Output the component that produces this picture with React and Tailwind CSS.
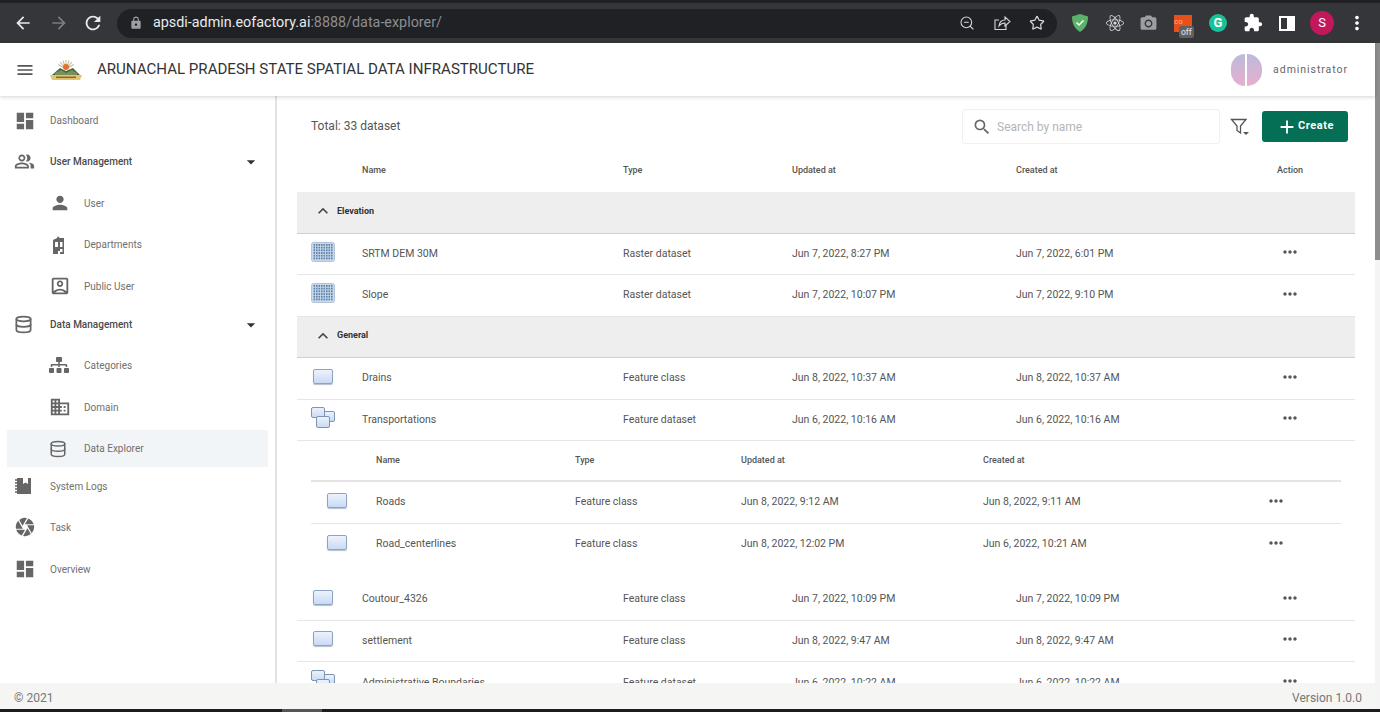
import { Database, ZoomOut, Star } from 'lucide-react'
import {
  MdArrowBack, MdArrowForward, MdRefresh, MdLock, MdMenu, MdDashboard, MdOutlinePeopleAlt, MdPerson,
  MdOutlineAccountBox, MdDomain, MdCamera, MdArrowDropDown, MdSearch, MdAdd, MdMoreHoriz, MdMoreVert,
  MdExpandLess, MdExtension, MdPhotoCamera,
} from 'react-icons/md'
import { FaSitemap, FaReact } from 'react-icons/fa'

function Logo() {
  return (
    <svg width="34" height="22" viewBox="0 0 34 22">
      {[-60, -40, -20, 0, 20, 40, 60].map((a) => (
        <line key={a} x1="17" y1="9" x2="17" y2="1" stroke="#c9b9a0" strokeWidth="1" transform={`rotate(${a} 17 10)`} />
      ))}
      <circle cx="17" cy="8" r="3" fill="#e2702a" />
      <path d="M3 16 L11 9 L17 12 L24 9 L31 16 Z" fill="#3f6b3a" />
      <path d="M6 14 L12 11 L17 14 L23 11 L28 14 L28 16 L6 16 Z" fill="#7a8f5c" />
      <path d="M1 16 H33 L31 21 H3 Z" fill="#e3c56f" />
      <rect x="7" y="17.5" width="20" height="1.6" fill="#8a6a2a" />
    </svg>
  )
}

function Notebook() {
  return (
    <svg width="18" height="18" viewBox="0 0 18 18" fill="#666">
      <path d="M3 1 H9 V7 L11.5 5.5 L14 7 V1 H17 V17 H3 Z" />
      <path d="M1 3 H4 M1 6 H4 M1 9 H4 M1 12 H4 M1 15 H4" stroke="#666" strokeWidth="1.4" />
    </svg>
  )
}

function Building() {
  return (
    <svg width="20" height="20" viewBox="0 0 20 20" fill="#666">
      <path fillRule="evenodd" d="M4 5 L8 3 L9 1 L10.5 3 L15 3 V19 H11 V16 H9 V19 H4 Z M6 7 V12 H9 V7 Z M11 7 V12 H13.5 V7 Z M11 14 H13.5 V17 H11 Z" />
    </svg>
  )
}

function RasterIcon() {
  const cells = []
  for (let y = 0; y < 6; y++) {
    for (let x = 0; x < 8; x++) {
      cells.push(<rect key={`${x}-${y}`} x={2.5 + x * 2.5} y={2 + y * 2.7} width="1.6" height="1.8" fill="#5c83ad" />)
    }
  }
  return (
    <svg width="24" height="20" viewBox="0 0 24 20">
      <rect x="0.5" y="0.5" width="23" height="19" rx="2" fill="#c9d8ea" stroke="#b4c4d8" />
      {cells}
    </svg>
  )
}

function FeatureClassIcon() {
  return <div className="h-[15px] w-[20px] rounded-[2px] border border-[#8ea3c0] bg-linear-to-b from-[#edf3fc] to-[#c8daf5] shadow-[0_1px_1px_#b5bfcc]" />
}

function FeatureDatasetIcon() {
  return (
    <svg width="24" height="21" viewBox="0 0 24 21">
      <defs>
        <linearGradient id="fd" x1="0" y1="0" x2="0" y2="1">
          <stop offset="0" stopColor="#edf3fc" />
          <stop offset="1" stopColor="#c8daf5" />
        </linearGradient>
      </defs>
      <rect x="11.5" y="4.5" width="12" height="10" rx="1.5" fill="url(#fd)" stroke="#7f93b2" />
      <rect x="0.5" y="0.5" width="13" height="10" rx="1.5" fill="url(#fd)" stroke="#7f93b2" />
      <rect x="5.5" y="9.5" width="13" height="11" rx="1.5" fill="url(#fd)" stroke="#7f93b2" />
    </svg>
  )
}

function RowIcon({ kind }) {
  if (kind === 'raster') return <RasterIcon />
  if (kind === 'dataset') return <FeatureDatasetIcon />
  return <div className="pl-[2px]"><FeatureClassIcon /></div>
}

const sideItems = [
  { label: 'Dashboard', icon: <MdDashboard size={22} />, h: 'h-[41px]' },
  { label: 'User Management', icon: <MdOutlinePeopleAlt size={21} />, h: 'h-[41px]', open: true },
  { label: 'User', icon: <MdPerson size={22} />, h: 'h-[42px]', sub: true },
  { label: 'Departments', icon: <Building />, h: 'h-[41px]', sub: true },
  { label: 'Public User', icon: <MdOutlineAccountBox size={22} />, h: 'h-[42px]', sub: true },
  { label: 'Data Management', icon: <Database size={19} strokeWidth={2.2} />, h: 'h-[35px]', open: true },
  { label: 'Categories', icon: <FaSitemap size={20} />, h: 'h-[44px] pt-[2px]', sub: true },
  { label: 'Domain', icon: <MdDomain size={22} />, h: 'h-[42px]', sub: true },
  { label: 'Data Explorer', icon: <Database size={18} strokeWidth={2} />, h: 'h-[37px] mt-[2px]', sub: true, active: true },
  { label: 'System Logs', icon: <Notebook />, h: 'h-[38px]' },
  { label: 'Task', icon: <MdCamera size={22} />, h: 'h-[42px] mt-px' },
  { label: 'Overview', icon: <MdDashboard size={22} />, h: 'h-[42px]' },
]

function SideItem({ item }) {
  return (
    <div className={`flex items-center ${item.h} ${item.active ? 'ml-[7px] mr-[7px] bg-[#f2f5f8]' : ''} ${item.sub ? (item.active ? 'pl-[42px]' : 'pl-[49px]') : 'pl-[14px]'} text-[#666]`}>
      <span className={`flex shrink-0 items-center ${item.sub ? 'w-[35px]' : 'w-[36px]'}`}>{item.icon}</span>
      <span className={`text-[10px] ${item.open ? 'font-medium text-[#4a4a4a]' : 'text-[#707070]'}`}>{item.label}</span>
      {item.open && <MdArrowDropDown size={20} className="ml-auto mr-[14px] text-[#333]" />}
    </div>
  )
}

function Row({ kind, name, type, updated, created, h = 'h-[41.5px]', border = true }) {
  return (
    <div className={`grid grid-cols-[65px_261px_169px_224px_261px_1fr] items-center ${h} ${border ? 'border-b border-[#e6e6e6]' : ''} text-[10.5px] text-[#555]`}>
      <div className="mb-[4px] pl-[14px]"><RowIcon kind={kind} /></div>
      <div>{name}</div>
      <div>{type}</div>
      <div>{updated}</div>
      <div>{created}</div>
      <div className="mb-[3px] pl-[3px] text-[#555]"><MdMoreHoriz size={20} /></div>
    </div>
  )
}

function SubRow({ name, type, updated, created, border = true }) {
  return (
    <div className={`grid grid-cols-[65px_199px_166px_242px_283px_1fr] items-center h-[41.5px] ${border ? 'border-b border-[#e6e6e6]' : ''} text-[10.5px] text-[#555]`}>
      <div className="mb-[4px] pl-[14px]"><RowIcon kind="class" /></div>
      <div>{name}</div>
      <div>{type}</div>
      <div>{updated}</div>
      <div>{created}</div>
      <div className="mb-[3px] text-[#555]"><MdMoreHoriz size={20} /></div>
    </div>
  )
}

function GroupRow({ label }) {
  return (
    <div className="flex h-[41.5px] items-center border-b border-[#cfcfcf] bg-[#eeeeee] pb-[2px] pl-[16px] text-[#444]">
      <MdExpandLess size={20} />
      <span className="ml-[4px] text-[9px] font-bold text-[#333]">{label}</span>
    </div>
  )
}

export default function App() {
  return (
    <div className="flex h-[712px] w-[1380px] flex-col overflow-hidden bg-white font-['Roboto',sans-serif]">
      {/* browser toolbar */}
      <div className="flex h-[43px] shrink-0 flex-col bg-[#35363a]">
        <div className="h-[3px] bg-[#202124]" />
        <div className="flex flex-1 items-center pl-[13px] text-[#e8eaed]">
          <MdArrowBack size={20} />
          <MdArrowForward size={20} className="ml-[16px] text-[#7c7d80]" />
          <MdRefresh size={22} className="ml-[13px]" />
          <div className="ml-[13px] flex h-[29px] w-[940px] items-center rounded-full bg-[#202124] pl-[12px] pr-[12px]">
            <MdLock size={14} className="text-[#9aa0a6]" />
            <span className="ml-[10px] text-[14.35px] text-[#e8eaed]">apsdi-admin.eofactory.ai<span className="text-[#8b8e92]">:8888/data-explorer/</span></span>
            <div className="ml-auto flex items-center gap-[18px] text-[#d5d7da]">
              <ZoomOut size={16} strokeWidth={1.6} />
              <svg width="18" height="18" viewBox="0 0 18 18" fill="none" stroke="#d5d7da" strokeWidth="1.1">
                <path d="M13 11 V15.5 H2 V6 H6" />
                <path d="M6 12 C6.5 8 9 6 12 6 V3 L17 7.5 L12 12 V9 C9.5 9 7.5 10 6 12 Z" />
              </svg>
              <Star size={16} strokeWidth={1.8} />
            </div>
          </div>
          <div className="ml-[14px] flex items-center">
            <svg width="18" height="20" viewBox="0 0 18 20">
              <path d="M9 1 L17 3.5 C17 11 14 16 9 19 C4 16 1 11 1 3.5 Z" fill="#5bb36a" />
              <path d="M5.5 9.5 L8 12 L12.5 7.5" fill="none" stroke="#fff" strokeWidth="1.5" />
            </svg>
            <FaReact size={18} className="ml-[17px] text-[#d8dadd]" />
            <MdPhotoCamera size={19} className="ml-[15px] text-[#9d9ea1]" />
            <div className="relative ml-[16px] h-[17px] w-[18px] bg-[#e8501a] text-[8px] leading-[13px] text-[#ffb088]">
              co
              <span className="absolute left-[5px] top-[11px] rounded-[2px] bg-[#5f6063] px-[2px] text-[8.5px] leading-[12px] text-[#e8eaed]">off</span>
            </div>
            <div className="ml-[17px] flex h-[18px] w-[18px] items-center justify-center rounded-full bg-[#15c39a] text-[13px] font-bold text-white">G</div>
            <MdExtension size={20} className="ml-[16px] text-white" />
            <div className="ml-[16px] flex h-[15px] w-[16px] justify-end border-2 border-white"><div className="h-full w-[6px] bg-white" /></div>
            <div className="ml-[15px] flex h-[24px] w-[24px] items-center justify-center rounded-full bg-[#c2185b] text-[13px] text-white">S</div>
            <MdMoreVert size={22} className="ml-[12px] text-white" />
          </div>
        </div>
      </div>

      <div className="flex min-h-0 flex-1">
        <div className="flex min-w-0 flex-1 flex-col">
          {/* app header */}
          <div className="relative z-10 flex h-[53px] shrink-0 items-center bg-white pl-[15px] pr-[27px] shadow-[0_1px_4px_rgba(0,0,0,0.18)]">
            <MdMenu size={20} className="text-[#555]" />
            <div className="ml-[14px]"><Logo /></div>
            <span className="ml-[14px] text-[15.07px] text-[#333]">ARUNACHAL PRADESH STATE SPATIAL DATA INFRASTRUCTURE</span>
            <div className="ml-auto flex items-center">
              <div className="flex gap-[2px]">
                <div className="h-[32px] w-[14px] rounded-l-full bg-linear-to-t from-[#e6afcc] to-[#bdb9dd]" />
                <div className="h-[32px] w-[15px] rounded-r-full bg-linear-to-t from-[#e6afcc] to-[#bdb9dd]" />
              </div>
              <span className="ml-[11px] text-[10.5px] tracking-[0.95px] text-[#666]">administrator</span>
            </div>
          </div>

          <div className="flex min-h-0 flex-1">
            {/* sidebar */}
            <div className="w-[277px] shrink-0 overflow-hidden border-r-2 border-[#e3e3e3] pt-[4px]">
              {sideItems.map((item) => <SideItem key={item.label} item={item} />)}
            </div>

            {/* content */}
            <div className="min-w-0 flex-1 overflow-hidden pl-[20px] pr-[20px]">
              <div className="flex h-[55px] items-center pl-[14px] pt-[6px]">
                <span className="mb-[2px] text-[12px] text-[#555]">Total: 33 dataset</span>
                <div className="ml-auto flex h-[35px] w-[258px] items-center rounded-[3px] border border-[#f0f0f5] pl-[9px] text-[#666]">
                  <MdSearch size={20} />
                  <span className="ml-[5px] text-[12px] text-[#b5b5b5]">Search by name</span>
                </div>
                <svg width="20" height="20" viewBox="0 0 20 20" fill="none" className="ml-[10px]">
                  <path d="M1.5 2.5 H16 L10.5 9 V16 L7 13.5 V9 Z" stroke="#555" strokeWidth="1.3" />
                  <path d="M13 15 H19 L16 18 Z" fill="#555" />
                </svg>
                <div className="ml-[12px] mr-[7px] flex h-[31px] w-[86px] items-center justify-center rounded-[3px] bg-[#056f55] text-[11px] font-bold tracking-[0.6px] text-white">
                  <MdAdd size={22} />
                  <span>Create</span>
                </div>
              </div>

              <div className="grid h-[41px] grid-cols-[65px_261px_169px_224px_261px_1fr] items-center pb-[1px] text-[9px] font-medium text-[#555]">
                <div />
                <div>Name</div>
                <div>Type</div>
                <div>Updated at</div>
                <div>Created at</div>
                <div>Action</div>
              </div>

              <GroupRow label="Elevation" />
              <Row kind="raster" name="SRTM DEM 30M" type="Raster dataset" updated="Jun 7, 2022, 8:27 PM" created="Jun 7, 2022, 6:01 PM" />
              <Row kind="raster" name="Slope" type="Raster dataset" updated="Jun 7, 2022, 10:07 PM" created="Jun 7, 2022, 9:10 PM" />
              <GroupRow label="General" />
              <Row kind="class" name="Drains" type="Feature class" updated="Jun 8, 2022, 10:37 AM" created="Jun 8, 2022, 10:37 AM" />
              <Row kind="dataset" name="Transportations" type="Feature dataset" updated="Jun 6, 2022, 10:16 AM" created="Jun 6, 2022, 10:16 AM" />

              {/* nested table */}
              <div className="ml-[14px] mr-[14px] h-[138px]">
                <div className="grid h-[41px] grid-cols-[65px_199px_166px_242px_283px_1fr] items-center border-b-2 border-[#e4e4e4] pt-[1px] text-[9px] font-medium text-[#555]">
                  <div />
                  <div>Name</div>
                  <div>Type</div>
                  <div>Updated at</div>
                  <div>Created at</div>
                  <div />
                </div>
                <SubRow name="Roads" type="Feature class" updated="Jun 8, 2022, 9:12 AM" created="Jun 8, 2022, 9:11 AM" />
                <SubRow name="Road_centerlines" type="Feature class" updated="Jun 8, 2022, 12:02 PM" created="Jun 6, 2022, 10:21 AM" border={false} />
              </div>

              <Row kind="class" name="Coutour_4326" type="Feature class" updated="Jun 7, 2022, 10:09 PM" created="Jun 7, 2022, 10:09 PM" />
              <Row kind="class" name="settlement" type="Feature class" updated="Jun 8, 2022, 9:47 AM" created="Jun 8, 2022, 9:47 AM" />
              <Row kind="dataset" name="Administrative Boundaries" type="Feature dataset" updated="Jun 6, 2022, 10:22 AM" created="Jun 6, 2022, 10:22 AM" border={false} />
            </div>
          </div>

          {/* footer */}
          <div className="relative z-10 flex h-[26px] shrink-0 items-center justify-between bg-[#f5f5f3] pl-[14px] pr-[13px] pt-[3px] text-[12px] text-[#777]">
            <span>© 2021</span>
            <span>Version 1.0.0</span>
          </div>
        </div>

        {/* page scrollbar */}
        <div className="w-[5px] shrink-0 bg-[#f4f4f4]">
          <div className="h-[217px] bg-[#8d8d8d]" />
        </div>
      </div>
      <div className="flex h-[3px] shrink-0 bg-[#1d1c1c]">
        <div className="ml-[282px] h-full w-[40px] bg-[#555]" />
      </div>
    </div>
  )
}
